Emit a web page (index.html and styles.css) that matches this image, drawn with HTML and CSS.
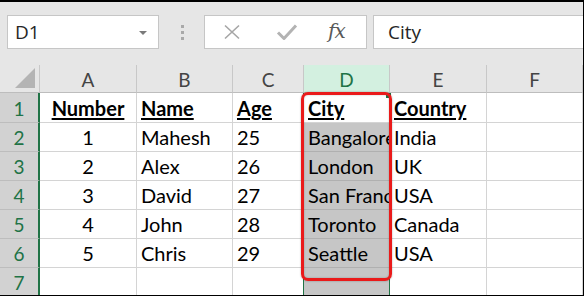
FILE: index.html
```html
<!DOCTYPE html>
<html>
<head>
<meta charset="utf-8">
<link rel="stylesheet" href="styles.css">
</head>
<body>
<div class="frame">
  <div class="toolbar">
    <div class="namebox">
      <span class="nb-text">D1</span>
      <span class="nb-arrow"></span>
    </div>
    <div class="grip"><span></span><span></span><span></span></div>
    <div class="fxbox">
      <svg class="ic-x" width="18" height="16" viewBox="0 0 18 16"><path d="M2 1.5 L16 14.5 M16 1.5 L2 14.5" stroke="#a6a6a6" stroke-width="1.6" fill="none"/></svg>
      <svg class="ic-check" width="22" height="18" viewBox="0 0 22 18"><path d="M2 9.5 L8 15.5 L20 2.5" stroke="#b3b3b3" stroke-width="3" fill="none" stroke-linejoin="round"/></svg>
      <span class="fx">fx</span>
    </div>
    <div class="formula">City</div>
  </div>
  <div class="sheet-wrap">
    <div class="sheet">
      <div class="corner"><span class="tri"></span></div>
      <div class="ch">A</div>
      <div class="ch">B</div>
      <div class="ch">C</div>
      <div class="ch chsel">D</div>
      <div class="ch">E</div>
      <div class="ch">F</div>

      <div class="rh">1</div>
      <div class="c ctr"><span class="b">Number</span></div>
      <div class="c"><span class="b">Name</span></div>
      <div class="c"><span class="b">Age</span></div>
      <div class="c active"><span class="b">City</span></div>
      <div class="c"><span class="b">Country</span></div>
      <div class="c"></div>

      <div class="rh">2</div>
      <div class="c ctr">1</div>
      <div class="c">Mahesh</div>
      <div class="c">25</div>
      <div class="c sel">Bangalore</div>
      <div class="c">India</div>
      <div class="c"></div>

      <div class="rh">3</div>
      <div class="c ctr">2</div>
      <div class="c">Alex</div>
      <div class="c">26</div>
      <div class="c sel">London</div>
      <div class="c">UK</div>
      <div class="c"></div>

      <div class="rh">4</div>
      <div class="c ctr">3</div>
      <div class="c">David</div>
      <div class="c">27</div>
      <div class="c sel">San Francisco</div>
      <div class="c">USA</div>
      <div class="c"></div>

      <div class="rh">5</div>
      <div class="c ctr">4</div>
      <div class="c">John</div>
      <div class="c">28</div>
      <div class="c sel">Toronto</div>
      <div class="c">Canada</div>
      <div class="c"></div>

      <div class="rh">6</div>
      <div class="c ctr">5</div>
      <div class="c">Chris</div>
      <div class="c">29</div>
      <div class="c sel">Seattle</div>
      <div class="c">USA</div>
      <div class="c"></div>

      <div class="rh">7</div>
      <div class="c"></div>
      <div class="c"></div>
      <div class="c"></div>
      <div class="c sel"></div>
      <div class="c"></div>
      <div class="c"></div>
    </div>
    <div class="selection"></div>
    <div class="handle"></div>
    <div class="highlight"></div>
  </div>
</div>
</body>
</html>
```

FILE: styles.css
```css
* { box-sizing: border-box; }
html, body { margin: 0; padding: 0; background: #e6e6e6; }
.frame {
  width: 584px;
  height: 296px;
  border-top: 2px solid #000;
  border-right: 1px solid #000;
  border-bottom: 1px solid #000;
  background: #e6e6e6;
  overflow: hidden;
  font-family: Lato, "Liberation Sans", sans-serif;
}
.toolbar {
  height: 63px;
  display: flex;
  align-items: flex-start;
  padding: 13px 0 0 7px;
}
.namebox {
  width: 152px;
  height: 34px;
  background: #fff;
  border: 1px solid #c6c6c6;
  display: flex;
  align-items: center;
  justify-content: space-between;
  padding: 0 11px 0 7px;
}
.nb-text, .formula {
  font-family: "Open Sans", "Noto Sans", sans-serif;
  font-size: 19px;
  color: #262626;
}
.nb-arrow {
  width: 0; height: 0;
  border-left: 4px solid transparent;
  border-right: 4px solid transparent;
  border-top: 4px solid #7a7a7a;
  margin-top: 2px;
}
.grip {
  width: 45px;
  height: 34px;
  display: flex;
  flex-direction: column;
  align-items: center;
  justify-content: center;
  gap: 3px;
  padding-left: 1px;
}
.grip span { width: 3px; height: 3px; background: #a9a9a9; }
.fxbox {
  width: 163px;
  height: 34px;
  background: #fff;
  border: 1px solid #c6c6c6;
  display: flex;
  align-items: center;
  padding-left: 18px;
}
.ic-x { margin-right: 35px; }
.ic-check { margin-right: 30px; }
.fx {
  font-family: "DejaVu Serif", "Liberation Serif", serif;
  font-style: italic;
  font-size: 20px;
  letter-spacing: -1px;
  color: #595959;
  margin-top: -3px;
}
.formula {
  flex: 1;
  height: 34px;
  margin-left: 6px;
  background: #fff;
  border: 1px solid #c6c6c6;
  border-right: none;
  display: flex;
  align-items: center;
  padding-left: 14px;
  padding-bottom: 1px;
}
.sheet-wrap { position: relative; }
.sheet {
  display: grid;
  grid-template-columns: 40px 97px 96px 71px 86px 97px 96px;
  grid-template-rows: 28px 30px 29px 29px 29px 29px 29px 29px;
  background: #fff;
}
.corner {
  background: #e6e6e6;
  border-right: 1px solid #c8c8c8;
  border-bottom: 1px solid #bdbdbd;
  position: relative;
}
.tri {
  position: absolute;
  right: 4px; bottom: 4px;
  width: 0; height: 0;
  border-left: 20px solid transparent;
  border-bottom: 20px solid #b4b4b4;
}
.ch {
  background: #e6e6e6;
  border-right: 1px solid #c8c8c8;
  border-bottom: 1px solid #bdbdbd;
  display: flex;
  align-items: center;
  justify-content: center;
  font-size: 19px;
  color: #444;
  padding-top: 2px;
}
.chsel { background: #d3f0e0; color: #217346; }
.rh {
  background: #d2d2d2;
  border-right: 2px solid #217346;
  border-bottom: 1px solid #bdbdbd;
  display: flex;
  align-items: center;
  justify-content: center;
  font-size: 19px;
  color: #217346;
  padding-top: 1px;
}
.c {
  border-right: 1px solid #d4d4d4;
  border-bottom: 1px solid #d4d4d4;
  font-size: 20px;
  color: #000;
  white-space: nowrap;
  overflow: hidden;
  display: flex;
  align-items: flex-end;
  padding: 0 0 4px 4px;
  line-height: 1;
}
.ctr { justify-content: center; padding-left: 0; }
.b { font-weight: bold; text-decoration: underline; text-underline-offset: 2px; text-decoration-thickness: 1.5px; }
.sel { background: #c6c6c6; border-bottom-color: #b0b0b0; border-right-color: #c6c6c6; }
.active { background: #fff; }
.selection {
  position: absolute;
  left: 303px; top: 28px;
  width: 87px; height: 210px;
  border-left: 1.5px solid #217346;
  border-right: 1.5px solid #217346;
}
.handle {
  position: absolute;
  left: 386px; top: 28px;
  width: 5px; height: 5px;
  background: #217346;
}
.highlight {
  position: absolute;
  left: 301px; top: 27px;
  width: 91px; height: 189px;
  border: 3px solid #ea1a1a;
  border-radius: 7px;
  box-shadow: 0 0 2px rgba(0,0,0,0.35), inset 0 0 2px rgba(0,0,0,0.25);
}
```
